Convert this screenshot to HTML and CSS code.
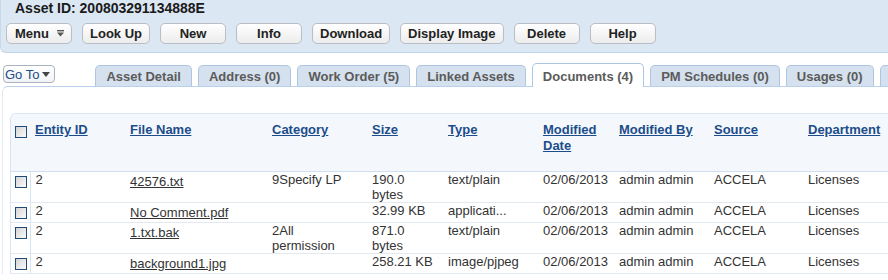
FILE: index.html
```html
<!DOCTYPE html>
<html>
<head>
<meta charset="utf-8">
<link rel="stylesheet" href="styles.css">
</head>
<body>
<div class="topbar">
  <div class="title">Asset ID: 200803291134888E</div>
  <div class="actions">
    <button class="btn btn-menu">Menu<svg class="menu-ico" width="7" height="7" viewBox="0 0 7 7"><rect x="0" y="0" width="7" height="1.4" fill="#555"/><path d="M0 2.6 H7 L3.5 6.6 Z" fill="#555"/></svg></button>
    <button class="btn">Look Up</button>
    <button class="btn">New</button>
    <button class="btn">Info</button>
    <button class="btn">Download</button>
    <button class="btn">Display Image</button>
    <button class="btn">Delete</button>
    <button class="btn">Help</button>
  </div>
</div>
<div class="tabbar">
  <button class="goto">Go To<svg class="goto-ico" width="8" height="5" viewBox="0 0 8 5"><path d="M0 0 H8 L4 5 Z" fill="#444"/></svg></button>
  <ul class="tabs">
    <li class="tab">Asset Detail</li>
    <li class="tab">Address (0)</li>
    <li class="tab">Work Order (5)</li>
    <li class="tab">Linked Assets</li>
    <li class="tab active">Documents (4)</li>
    <li class="tab">PM Schedules (0)</li>
    <li class="tab">Usages (0)</li>
    <li class="tab">Costs (0)</li>
  </ul>
</div>
<div class="content">
  <div class="grid-wrap">
    <table class="grid">
      <colgroup>
        <col class="c-cb"><col class="c-id"><col class="c-file"><col class="c-cat"><col class="c-size"><col class="c-type"><col class="c-date"><col class="c-by"><col class="c-src"><col class="c-dept">
      </colgroup>
      <thead>
        <tr class="head">
          <th class="cbcell"><span class="cb cb-head"></span></th>
          <th><a class="sort">Entity ID</a></th>
          <th><a class="sort">File Name</a></th>
          <th><a class="sort">Category</a></th>
          <th><a class="sort">Size</a></th>
          <th><a class="sort">Type</a></th>
          <th><a class="sort">Modified Date</a></th>
          <th><a class="sort">Modified By</a></th>
          <th><a class="sort">Source</a></th>
          <th><a class="sort">Department</a></th>
        </tr>
      </thead>
      <tbody>
        <tr>
          <td class="cbcell"><span class="cb"></span></td>
          <td>2</td>
          <td class="file"><a class="doc">42576.txt</a></td>
          <td class="cat">9Specify LP</td>
          <td>190.0 bytes</td>
          <td>text/plain</td>
          <td>02/06/2013</td>
          <td>admin admin</td>
          <td>ACCELA</td>
          <td>Licenses</td>
        </tr>
        <tr>
          <td class="cbcell"><span class="cb"></span></td>
          <td>2</td>
          <td class="file"><a class="doc">No Comment.pdf</a></td>
          <td class="cat"></td>
          <td>32.99 KB</td>
          <td>applicati...</td>
          <td>02/06/2013</td>
          <td>admin admin</td>
          <td>ACCELA</td>
          <td>Licenses</td>
        </tr>
        <tr>
          <td class="cbcell"><span class="cb"></span></td>
          <td>2</td>
          <td class="file"><a class="doc">1.txt.bak</a></td>
          <td class="cat">2All permission</td>
          <td>871.0 bytes</td>
          <td>text/plain</td>
          <td>02/06/2013</td>
          <td>admin admin</td>
          <td>ACCELA</td>
          <td>Licenses</td>
        </tr>
        <tr>
          <td class="cbcell"><span class="cb"></span></td>
          <td>2</td>
          <td class="file"><a class="doc">background1.jpg</a></td>
          <td class="cat"></td>
          <td>258.21 KB</td>
          <td>image/pjpeg</td>
          <td>02/06/2013</td>
          <td>admin admin</td>
          <td>ACCELA</td>
          <td>Licenses</td>
        </tr>
      </tbody>
    </table>
  </div>
</div>
</body>
</html>
```
FILE: styles.css
```css
html, body {
  margin: 0;
  padding: 0;
  overflow: hidden;
  background: #ffffff;
}
body {
  font-family: "Liberation Sans", Arial, sans-serif;
  font-size: 13px;
  color: #333333;
  width: 888px;
  height: 280px;
}
.topbar {
  background: #dce7f4;
  border-bottom: 1px solid #bfd3ea;
  border-left: 1px solid #c9d9ec;
  border-bottom-left-radius: 6px;
  padding: 1px 0 8px 0;
}
.title {
  font-size: 14px;
  font-weight: bold;
  color: #1a1a1a;
  line-height: 15px;
  padding-left: 14px;
}
.actions {
  display: flex;
  gap: 10px;
  margin-top: 7px;
  padding-left: 5px;
}
.btn {
  font-family: inherit;
  font-size: 13px;
  font-weight: bold;
  color: #222222;
  height: 21px;
  min-width: 66px;
  padding: 0 7px;
  border: 1px solid #b9bec4;
  border-radius: 5px;
  background: linear-gradient(#ffffff, #ececec);
  display: flex;
  align-items: center;
  justify-content: center;
  line-height: 15px;
  flex: none;
}
.btn-menu {
  justify-content: flex-start;
  padding-left: 8px;
}
.menu-ico {
  margin-left: 8px;
}
.tabbar {
  display: flex;
  align-items: flex-end;
  height: 33px;
  padding-left: 3px;
}
.goto {
  flex: none;
  font-family: inherit;
  font-size: 13px;
  color: #1c4a86;
  height: 18px;
  padding: 0 4px 0 1px;
  margin-bottom: 3px;
  border: 1px solid #a9b3be;
  border-radius: 4px;
  background: linear-gradient(#ffffff, #f1f3f6);
  display: flex;
  align-items: center;
  line-height: 15px;
  white-space: nowrap;
}
.goto-ico {
  margin-left: 3px;
}
.tabs {
  flex: none;
  list-style: none;
  margin: 0 0 0 40px;
  padding: 0;
  display: flex;
  align-items: flex-end;
  gap: 6px;
  white-space: nowrap;
}
.tab {
  font-weight: bold;
  color: #5b5b5b;
  line-height: 15px;
  padding: 3px 10px 2px;
  background: #d5e1ee;
  border: 1px solid #adc6e3;
  border-bottom: none;
  border-radius: 5px 5px 0 0;
}
.tab.active {
  background: #ffffff;
  padding-top: 5px;
  padding-bottom: 3px;
  margin-bottom: -1px;
  position: relative;
  z-index: 1;
}
.content {
  margin-left: 2px;
  border-top: 1px solid #b9d0ea;
  border-left: 1px solid #e2eaf3;
  border-top-left-radius: 6px;
  padding: 26px 0 0 7px;
}
.grid-wrap {
  width: 1000px;
  border-top: 1px solid #d9e5f2;
  border-left: 1px solid #d9e5f2;
  border-top-left-radius: 6px;
  overflow: hidden;
}
.grid {
  border-collapse: collapse;
  table-layout: fixed;
  width: 892px;
}
.c-cb { width: 19px; }
.c-id { width: 95px; }
.c-file { width: 142px; }
.c-cat { width: 100px; }
.c-size { width: 76px; }
.c-type { width: 95px; }
.c-date { width: 76px; }
.c-by { width: 95px; }
.c-src { width: 94px; }
.c-dept { width: 100px; }
tr.head {
  height: 57px;
}
.grid th {
  text-align: left;
  vertical-align: top;
  padding: 8px 5px 0;
  background: #f4f8fc;
  border-bottom: 1px solid #cddff1;
  font-weight: bold;
  line-height: 16px;
}
.grid td {
  vertical-align: top;
  padding: 0 5px;
  border-top: 1px solid #e3e9f0;
  border-bottom: 1px solid #e3e9f0;
  line-height: 15px;
}
.grid th.cbcell, .grid td.cbcell {
  padding: 0;
}
.grid td.cbcell {
  border-right: 1px solid #d6e3f1;
}
.grid td.file {
  padding-top: 2px;
}
.grid td.cat {
  padding-right: 20px;
}
.sort {
  color: #1c4d8a;
  text-decoration: underline;
}
.doc {
  color: #333333;
  text-decoration: underline;
}
.cb {
  display: block;
  width: 10px;
  height: 10px;
  margin: 4px 0 3px 4px;
  border: 1px solid #1f4b79;
  background: linear-gradient(135deg, #d4d4d4, #fbfbfb);
}
.cb-head {
  margin-top: 12px;
}
```
